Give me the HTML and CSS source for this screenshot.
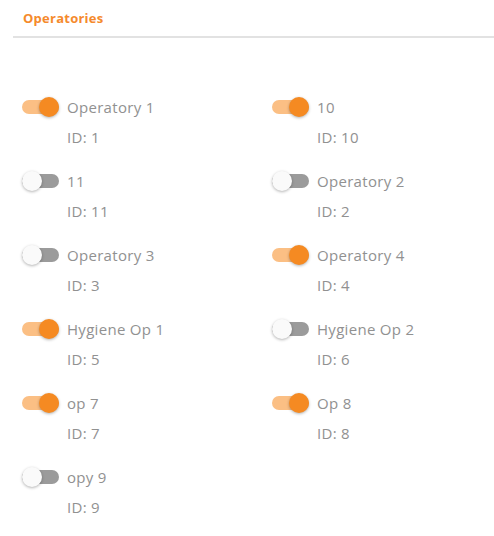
FILE: index.html
```
<!DOCTYPE html>
<html lang="en">
<head>
    <meta charset="UTF-8">
    <title>Operatories</title>
    <link rel="stylesheet" href="styles.css">
</head>
<body>
    <div class="panel">
        <div class="panel-head">
            <h3>Operatories</h3>
        </div>
        <div class="op-grid">
            <div class="op-item">
                <label class="op-row"><span class="switch on"><span class="thumb"></span></span>Operatory 1</label>
                <div class="op-id">ID: 1</div>
            </div>
            <div class="op-item">
                <label class="op-row"><span class="switch on"><span class="thumb"></span></span>10</label>
                <div class="op-id">ID: 10</div>
            </div>
            <div class="op-item">
                <label class="op-row"><span class="switch"><span class="thumb"></span></span>11</label>
                <div class="op-id">ID: 11</div>
            </div>
            <div class="op-item">
                <label class="op-row"><span class="switch"><span class="thumb"></span></span>Operatory 2</label>
                <div class="op-id">ID: 2</div>
            </div>
            <div class="op-item">
                <label class="op-row"><span class="switch"><span class="thumb"></span></span>Operatory 3</label>
                <div class="op-id">ID: 3</div>
            </div>
            <div class="op-item">
                <label class="op-row"><span class="switch on"><span class="thumb"></span></span>Operatory 4</label>
                <div class="op-id">ID: 4</div>
            </div>
            <div class="op-item">
                <label class="op-row"><span class="switch on"><span class="thumb"></span></span>Hygiene Op 1</label>
                <div class="op-id">ID: 5</div>
            </div>
            <div class="op-item">
                <label class="op-row"><span class="switch"><span class="thumb"></span></span>Hygiene Op 2</label>
                <div class="op-id">ID: 6</div>
            </div>
            <div class="op-item">
                <label class="op-row"><span class="switch on"><span class="thumb"></span></span>op 7</label>
                <div class="op-id">ID: 7</div>
            </div>
            <div class="op-item">
                <label class="op-row"><span class="switch on"><span class="thumb"></span></span>Op 8</label>
                <div class="op-id">ID: 8</div>
            </div>
            <div class="op-item">
                <label class="op-row"><span class="switch"><span class="thumb"></span></span>opy 9</label>
                <div class="op-id">ID: 9</div>
            </div>
        </div>
    </div>
</body>
</html>
```

FILE: styles.css
```
body { margin: 0; background: #fff; font-family: 'Open Sans', Arial, sans-serif; }
.panel { margin-left: 13px; }
.panel-head {
    border-bottom: 2px solid #e2e2e2;
    padding: 10px 10px 0 10px;
    height: 26px;
}
.panel-head h3 {
    margin: 0;
    font-size: 13px;
    font-weight: 700;
    color: #f58a2c;
    line-height: 16px;
    letter-spacing: 0.25px;
}
.op-grid {
    display: grid;
    grid-template-columns: 250px 1fr;
    row-gap: 22px;
    padding: 57px 0 0 9px;
}
.op-row {
    display: flex;
    align-items: center;
    height: 24px;
    font-size: 15px;
    letter-spacing: 0.3px;
    color: #919191;
}
.switch {
    position: relative;
    width: 37px;
    height: 14px;
    margin-right: 8px;
    border-radius: 7px;
    background: #9b9b9b;
}
.switch .thumb {
    position: absolute;
    top: -3px;
    left: 0;
    width: 20px;
    height: 20px;
    border-radius: 50%;
    background: #fafafa;
    box-shadow: 0 1px 3px rgba(0,0,0,0.3);
}
.switch.on { background: #fbbf84; }
.switch.on .thumb { left: 17px; background: #f58a22; }
.op-id {
    margin-top: 8px;
    padding-left: 45px;
    font-size: 15px;
    letter-spacing: 0.3px;
    line-height: 20px;
    color: #919191;
}
```
